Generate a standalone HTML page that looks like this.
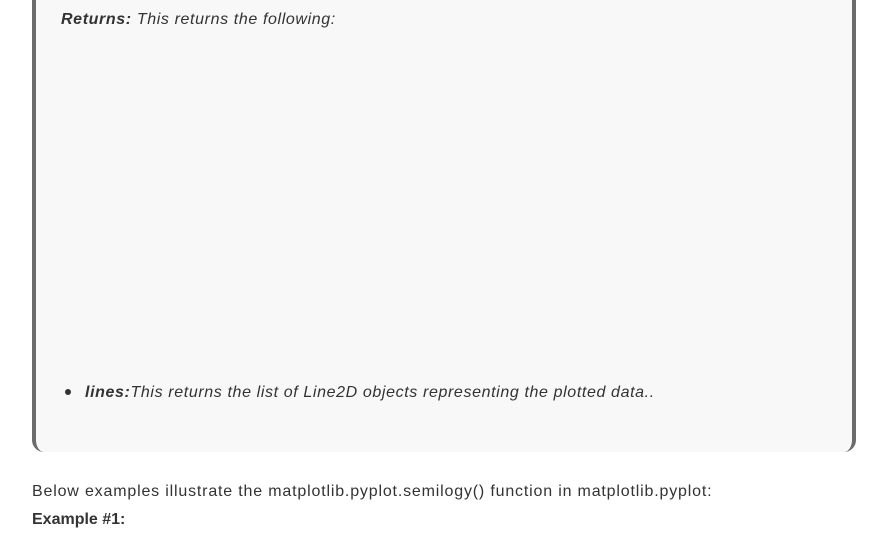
<!DOCTYPE html>
<html><head><style>
html,body{margin:0;padding:0;background:#fff;width:893px;height:541px;overflow:hidden;font-family:"Liberation Sans",sans-serif;color:#333;}
.box{position:absolute;left:32px;top:-20px;width:816px;height:472px;background:#f8f8f8;border-left:4px solid #6b6b6b;border-right:4px solid #6b6b6b;border-radius:0 0 12px 12px;box-sizing:content-box;}
.t{position:absolute;font-size:16px;white-space:nowrap;}
i{letter-spacing:0.62px;}
i b{font-weight:bold;}
.dot{position:absolute;left:65px;top:389px;width:6px;height:6px;border-radius:50%;background:#333;}
</style></head><body>
<div class="box"></div>
<div class="t" style="left:61px;top:11px;"><i><b>Returns:</b> This returns the following:</i></div>
<div class="dot"></div>
<div class="t" style="left:85px;top:384px;"><i><b>lines:</b>This returns the list of Line2D objects representing the plotted data..</i></div>
<div class="t" style="left:32px;top:483px;letter-spacing:0.82px;">Below examples illustrate the matplotlib.pyplot.semilogy() function in matplotlib.pyplot:</div>
<div class="t" style="left:32px;top:511px;"><b>Example #1:</b></div>
</body></html>
